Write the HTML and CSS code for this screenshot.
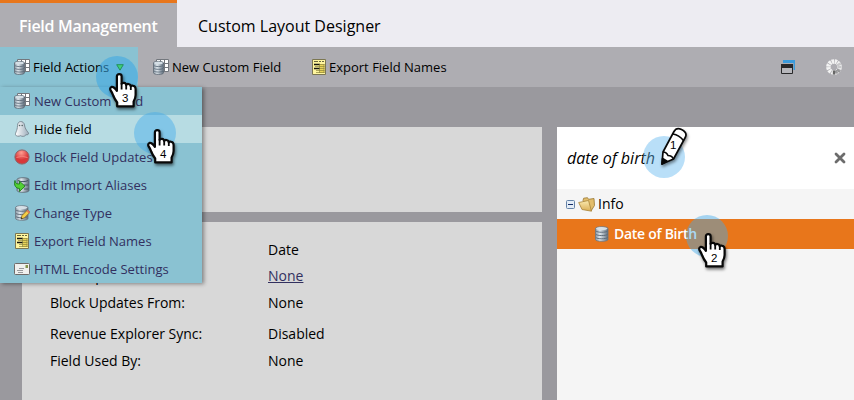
FILE: index.html
```html
<!DOCTYPE html>
<html lang="en">
<head>
<meta charset="utf-8">
<title>Field Management</title>
<link rel="stylesheet" href="styles.css">
</head>
<body>
<svg class="defs" aria-hidden="true">
  <defs>
    <linearGradient id="metal"><stop offset="0" stop-color="#8b98a4"/><stop offset=".35" stop-color="#dfe7ed"/><stop offset="1" stop-color="#5f6d7b"/></linearGradient>
    <linearGradient id="ghostFill"><stop offset="0" stop-color="#fff"/><stop offset="1" stop-color="#9dadbb"/></linearGradient>
    <radialGradient id="redFill" cx=".45" cy=".2"><stop offset="0" stop-color="#ff9d92"/><stop offset="1" stop-color="#d8383a"/></radialGradient>
    <linearGradient id="folderFill" x2="0" y2="1"><stop offset="0" stop-color="#fbeab0"/><stop offset="1" stop-color="#d9ad55"/></linearGradient>
    <symbol id="cylinder" viewBox="0 0 16 16">
      <path d="M1.500 2.500v11c0 2.400 12.500 2.400 12.500 0v-11c0-2.400-12.500-2.400-12.500 0z" fill="url(#metal)" stroke="#6b7783" stroke-width=".8"/>
      <ellipse cx="7.750" cy="2.600" rx="5.700" ry="1.500" fill="#d5dfe6"/>
      <path d="M2 5c1 1.700 10.500 1.700 11.500 0M2 8.300c1 1.700 10.500 1.700 11.500 0M2 11.500c1 1.700 10.500 1.700 11.500 0" fill="none" stroke="#566473" stroke-width=".9"/>
    </symbol>
    <symbol id="newfield" viewBox="0 0 16 16">
      <path d="M3.500.5h12v12h-12z" fill="#fff" stroke="#73777d"/>
      <path d="M7.500 .5v12M11.500 .5v12M3.500 4.500h12M3.500 8.500h12" stroke="#73777d" fill="none"/>
      <path d="M.5 4v9.800c0 2.200 10 2.200 10 0V4c0-2.200-10-2.200-10 0z" fill="url(#metal)" stroke="#5d6874" stroke-width=".8"/>
      <ellipse cx="5.500" cy="4" rx="4.400" ry="1.200" fill="#d5dfe6"/>
      <path d="M1 6.500c1 1.400 8 1.400 9 0M1 9.300c1 1.400 8 1.400 9 0M1 12c1 1.400 8 1.400 9 0" fill="none" stroke="#566473" stroke-width=".8"/>
    </symbol>
    <symbol id="ghost" viewBox="0 0 16 16">
      <path d="M3.500 4.500C3.500-.6 9.700-.8 10.500 4c.3 3 1.700 5 4 8 .5 1.500-1 2-2.500 1.700-1.500 2.300-4 1.800-5.500 1-1.500 1-4.500.6-4.800-.7C.5 12.500 3.500 10 3.500 4.500z" fill="url(#ghostFill)" stroke="#76848f" stroke-width=".9"/>
      <circle cx="5.500" cy="4.500" r=".8" fill="#566"/><circle cx="8.200" cy="4.500" r=".8" fill="#566"/>
    </symbol>
    <symbol id="block" viewBox="0 0 16 16">
      <circle cx="8" cy="8" r="7.100" fill="url(#redFill)" stroke="#8f6468"/>
      <path d="M2.500 8.500q5.500-2.500 11 0" stroke="#f77f79" fill="none"/>
    </symbol>
    <symbol id="import" viewBox="0 0 16 16">
      <path d="M3 2.500v11c0 2.400 12 2.400 12 0v-11c0-2.400-12-2.400-12 0z" fill="url(#metal)" stroke="#596570" stroke-width=".8"/>
      <path d="M4 3.500c2 1.500 8 1.500 10 0M10 8h4.500M10 12h4.500" stroke="#465564" fill="none"/>
      <path d="M1 3.500c0 3 2 3.500 4.500 3.500V4.200l5.500 5-5.500 5.300v-3C2 11.500-.5 8.500 1 3.500z" fill="#52cf35" stroke="#187a16" stroke-width=".9"/>
    </symbol>
    <symbol id="change" viewBox="0 0 16 16">
      <use href="#cylinder" width="16" height="16"/>
      <path d="M7 14l1-3.500L13.500 5 16 7.300l-5.500 5.500z" fill="#f5ce45" stroke="#876527" stroke-width=".8"/>
      <path d="M12.500 6l1-1.200L16 7.200l-1.200 1.200z" fill="#db7560"/><path d="M7 14l.5-1.700 1.200 1.200z" fill="#222"/>
    </symbol>
    <symbol id="export" viewBox="0 0 14 16">
      <path d="M.5.5h13v15H.5z" fill="#fff69e" stroke="#7b7651"/>
      <path d="M8 5h4.500v9H8z" fill="#ead558"/>
      <path d="M2 2.500h4M7 2.500h2M10 2.500h2" stroke="#69673d" fill="none"/>
      <path d="M2 5.500h6M2 9.500h6" stroke="#151510" stroke-width="1.300" fill="none"/>
      <path d="M8 5.500h4.500M3 7.500h9.500M8 9.500h4.500M4 11.500h8.500M4 13.500h8.500M7.500 5v9M12 5v9" stroke="#8d853c" stroke-width=".7" fill="none"/>
    </symbol>
    <symbol id="card" viewBox="0 0 16 12">
      <rect x=".5" y=".5" width="15" height="11" rx="1" fill="#f0f0ee" stroke="#6f6b69"/>
      <path d="M11.500 2h2.500v3h-2.500z" fill="#85944b"/><path d="M5 5.500h5M3 7.500h6M4 9.500h5" stroke="#98999b" fill="none"/>
    </symbol>
    <symbol id="hand" viewBox="0 0 32 38">
      <path d="M8.900 18V4.300Q8.900 2.200 11.200 2.200Q13.600 2.200 13.600 4.300V12Q14 10.600 16 10.800Q18 11 18.200 13Q18.800 11.800 20.400 12Q22.600 12.400 22.800 14.400Q23.600 13.300 25.200 13.800Q27.600 14.400 27.600 17V23Q27.600 26 25.600 29.500V34.400H9.200V30.500Q6.500 27 5.200 23.500Q4.500 21 2.400 18Q1.600 15.600 3.800 14.800Q6 14.600 8.900 18.800Z" fill="#fff" stroke="#080808" stroke-width="2.200" stroke-linejoin="round"/>
      <path d="M13.600 11v6.500M18.200 12.500v5M22.800 14v4" stroke="#080808" stroke-width="1.800" fill="none"/>
    </symbol>
  </defs>
</svg>

<nav class="tabs">
  <div class="tab active">Field Management</div>
  <div class="tab">Custom Layout Designer</div>
</nav>

<div class="toolbar">
  <div class="tool open"><svg class="icon"><use href="#newfield"/></svg><span class="t-actions">Field Actions</span>
    <svg class="arrow" viewBox="0 0 8 7"><path d="M.7.7h6.600L4 6.200z" fill="#3fcf78" stroke="#23915a"/></svg></div>
  <div class="tool second"><svg class="icon"><use href="#newfield"/></svg><span>New Custom Field</span></div>
  <div class="tool third"><svg class="icon narrow"><use href="#export"/></svg><span>Export Field Names</span></div>
  <div class="status">
    <svg width="14" height="14" viewBox="0 0 14 14"><path d="M2 0h12v10h-1.500V3H2z" fill="#3b9bdc"/><path d="M.5 4.500h11v9H.5z" fill="#b7b7bc" stroke="#28282a"/><path d="M0 4h12v4H0z" fill="#28282a"/></svg>
    <svg width="16" height="16" viewBox="-8 -8 16 16" fill="none" stroke-width="2.300"><circle r="5.600" stroke="#f3f3f3" stroke-width="4.500" stroke-dasharray="2.300 .63"/><path d="M1.500 3.500l1.300 3M3 2.500l3 2.500" stroke="#99999b"/><path d="M0 3.500v4" stroke="#666"/><path d="M3.500 0h4M3.200-1.700l3.300-1.800" stroke="#c8c8ca"/></svg>
  </div>
</div>

<main class="workspace">
  <div class="details">
    <section class="panel summary"></section>
    <section class="panel fields">
      <dl>
        <dt></dt><dd>Date</dd>
        <dt>API Map:</dt><dd><a>None</a></dd>
        <dt>Block Updates From:</dt><dd>None</dd>
        <dt>Revenue Explorer Sync:</dt><dd>Disabled</dd>
        <dt>Field Used By:</dt><dd>None</dd>
      </dl>
    </section>
  </div>
  <aside class="tree">
    <div class="search"><span>date of birth</span>
      <svg width="12" height="12" viewBox="0 0 12 12"><path d="M2 2l8 8M10 2l-8 8" stroke="#6c6c6c" stroke-width="2.800" stroke-linecap="round"/></svg></div>
    <div class="node folder">
      <svg width="9" height="9" viewBox="0 0 9 9"><rect x=".5" y=".5" width="8" height="8" rx="1" fill="#e3ecf6" stroke="#6583a8"/><path d="M2 4.500h5" stroke="#142e68"/></svg>
      <svg width="17" height="15" viewBox="0 0 17 15"><path d="M5 3.500l.7-2.300 3.800-.5 1 1.600 5.500-.8.500 7L13 14z" fill="#e2bd6c" stroke="#98762f" stroke-width=".8"/><path d="M.7 5.500L10.500 3.500l3 10.700L4 12.500z" fill="url(#folderFill)" stroke="#a8843a" stroke-width=".8"/></svg>
      <span>Info</span>
    </div>
    <div class="node selected"><svg class="icon"><use href="#cylinder"/></svg><span>Date of Birth</span></div>
  </aside>
</main>

<div class="menu">
  <div class="item"><svg class="icon"><use href="#newfield"/></svg><span>New Custom Field</span></div>
  <div class="item hover"><svg class="icon"><use href="#ghost"/></svg><span>Hide field</span></div>
  <div class="item"><svg class="icon"><use href="#block"/></svg><span>Block Field Updates</span></div>
  <div class="item"><svg class="icon"><use href="#import"/></svg><span>Edit Import Aliases</span></div>
  <div class="item"><svg class="icon"><use href="#change"/></svg><span>Change Type</span></div>
  <div class="item"><svg class="icon"><use href="#export"/></svg><span>Export Field Names</span></div>
  <div class="item"><svg class="icon card"><use href="#card"/></svg><span>HTML Encode Settings</span></div>
</div>

<div class="step s1"><svg class="pencil" viewBox="0 0 30 40"><g fill="#fff" stroke="#080808" stroke-width="1.700" stroke-linejoin="round"><path d="M2 38L3 26 14 5.500Q16.500 1 21.500 3.500Q27.500 6.500 25.500 11L13.500 33Z"/><path d="M3 26Q6.500 26 8 29.500Q12 29.500 13.500 33M13 8Q19 9 23.500 14.500" fill="none"/><path d="M2 38L2.500 32.500 6.800 35Z" fill="#080808"/></g></svg><b>1</b></div>
<div class="step s2"><svg class="hand"><use href="#hand"/></svg><b>2</b></div>
<div class="step s3"><svg class="hand"><use href="#hand"/></svg><b>3</b></div>
<div class="step s4"><svg class="hand"><use href="#hand"/></svg><b>4</b></div>
</body>
</html>
```
FILE: styles.css
```css
* { box-sizing: border-box; }
body {
  margin: 0;
  width: 854px;
  height: 400px;
  overflow: hidden;
  position: relative;
  background: #9a999e;
  color: #000;
  font: 13px/20px "Open Sans", sans-serif;
}
.defs { position: absolute; width: 0; height: 0; }
span, .tab, dt, dd { white-space: nowrap; }
svg { flex: none; }
.icon { width: 16px; height: 16px; }
.icon.card { height: 12px; }
.icon.narrow { width: 14px; }

.tabs { display: flex; height: 47px; background: #edecf2; font-size: 16px; }
.tab { padding: 15px 0 0 21px; line-height: 22px; }
.tab.active {
  width: 177px;
  padding: 12px 0 0 19px;
  border-top: 3px solid #e8761b;
  background: #aeadb2;
  color: #fff;
  font-weight: 600;
  letter-spacing: -.3px;
}

.toolbar { display: flex; height: 40px; background: #aeadb2; }
.tool { display: flex; align-items: center; gap: 3px; }
.tool.open { width: 138px; padding-left: 14px; background: #8ac2d2; }
.tool.second { padding-left: 15px; width: 174px; }
.arrow { position: relative; z-index: 2; width: 8px; height: 7px; margin-left: 4px; }
.status { display: flex; align-items: center; gap: 31px; margin-left: auto; padding-right: 12px; }

.workspace { display: flex; gap: 15px; height: 313px; padding: 40px 0 0 22px; }
.details { display: flex; flex-direction: column; gap: 10px; width: 520px; }
.panel { background: #d8d8d8; }
.summary { height: 85px; }
.fields { flex: 1; padding: 15px 28px 0; font-size: 14px; }
dl {
  display: grid;
  grid-template-columns: 218px 1fr;
  grid-template-rows: 26px 27px 31px 27px 26px;
  margin: 0;
  line-height: 26px;
}
dd { margin: 0; }
dd a { color: #32305f; text-decoration: underline; }

.tree { flex: 1; background: #f5f5f5; font-size: 14px; }
.search {
  display: flex;
  align-items: center;
  justify-content: space-between;
  height: 62px;
  padding: 0 8px 0 10px;
  background: #fff;
  font-size: 16px;
  font-style: italic;
}
.node { display: flex; align-items: center; height: 30px; }
.folder { padding-left: 9px; gap: 3px; }
.selected { padding-left: 37px; gap: 4px; background: #e8761b; color: #fff; font-weight: 600; letter-spacing: -.28px; }

.menu {
  position: absolute;
  left: 0;
  top: 87px;
  width: 202px;
  background: #8ac2d2;
  color: #32305f;
  box-shadow: 2px 1px 4px rgba(0, 0, 0, .4);
}
.item { display: flex; align-items: center; gap: 4px; height: 28px; padding-left: 14px; }
.item.hover { background: #b7dce3; color: #000; }

.step {
  position: absolute;
  width: 42px;
  height: 42px;
  border-radius: 50%;
  background: rgba(67, 170, 235, .45);
}
.s1 { left: 643px; top: 136px; background: rgba(100, 185, 240, .45); }
.s2 { left: 686px; top: 215px; }
.s3 { left: 96px; top: 56px; background: rgba(58, 168, 228, .55); }
.s4 { left: 134px; top: 112px; }
.hand, .pencil, .step b { position: absolute; }
.hand { left: 12px; top: 16px; width: 32px; height: 38px; filter: drop-shadow(1px 2px 1.500px rgba(0, 0, 0, .55)); }
.s2 .hand { top: 17px; left: 11px; }
.pencil { left: 17px; top: -10px; width: 30px; height: 40px; filter: drop-shadow(1px 2px 1.500px rgba(0, 0, 0, .45)); }
.step b { left: 26px; top: 36px; font: 11.500px/12px "Liberation Sans", sans-serif; }
.s1 b { left: 27px; top: 3px; }
.s2 b { left: 25px; top: 37px; }
```
